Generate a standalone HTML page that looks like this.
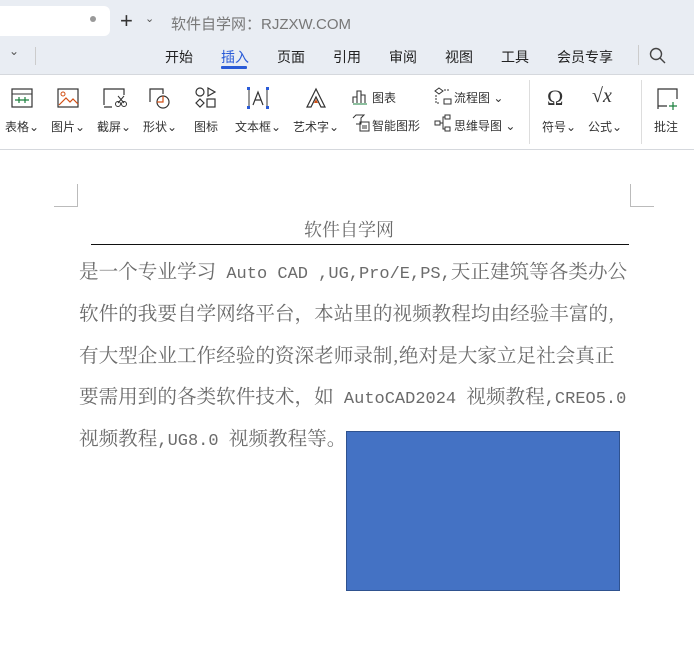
<!DOCTYPE html>
<html><head><meta charset="utf-8"><style>
*{margin:0;padding:0;box-sizing:border-box}
body{width:694px;height:651px;overflow:hidden;background:#fff;font-family:"Liberation Sans","Noto Sans CJK SC",sans-serif;position:relative}
.top{position:absolute;left:0;top:0;width:694px;height:74px;background:#e9edf3}
.tab{position:absolute;left:-10px;top:6px;width:120px;height:30px;background:#fff;border-radius:6px}
.a{position:absolute;white-space:nowrap}
.tb{position:absolute;left:0;top:74px;width:694px;height:76px;background:#fff;border-top:1px solid #d5d8dd;border-bottom:1px solid #d5d8dd}
.lbl{font-size:12px;color:#333}
.doc{font-family:"Noto Serif CJK SC","Liberation Serif",serif;font-size:19.6px;color:#6b6b6b;line-height:26px}
.m{font-family:"Liberation Mono",monospace;font-size:17px}
svg{position:absolute}
</style></head><body>
<div class="top"></div>
<div class="tab"></div>
<div class="a" style="left:90px;top:16px;width:6px;height:6px;border-radius:3px;background:#999"></div>
<div class="a" style="left:120px;top:8px;font-size:22px;color:#333">+</div>
<div class="a" style="left:145px;top:12px;font-size:11px;color:#555">⌄</div>
<div class="a" style="left:171px;top:13px;font-size:15px;color:#777">软件自学网：RJZXW.COM</div>
<div class="a" style="left:9px;top:44px;font-size:12px;color:#555">⌄</div>
<div class="a" style="left:35px;top:47px;width:1px;height:18px;background:#ccc"></div>
<div class="a" style="left:165px;top:47px;font-size:14px;color:#222">开始</div>
<div class="a" style="left:221px;top:47px;font-size:14px;color:#2a5bd7">插入</div>
<div class="a" style="left:221px;top:66px;width:26px;height:3px;background:#2a5bd7;border-radius:1px"></div>
<div class="a" style="left:277px;top:47px;font-size:14px;color:#222">页面</div>
<div class="a" style="left:333px;top:47px;font-size:14px;color:#222">引用</div>
<div class="a" style="left:389px;top:47px;font-size:14px;color:#222">审阅</div>
<div class="a" style="left:445px;top:47px;font-size:14px;color:#222">视图</div>
<div class="a" style="left:501px;top:47px;font-size:14px;color:#222">工具</div>
<div class="a" style="left:557px;top:47px;font-size:14px;color:#222">会员专享</div>
<div class="a" style="left:638px;top:45px;width:1px;height:20px;background:#ccc"></div>
<svg style="left:648px;top:46px" width="20" height="20"><circle cx="8" cy="8" r="5.5" fill="none" stroke="#444" stroke-width="1.4"/><path d="M12 12l5 5" stroke="#444" stroke-width="1.4"/></svg>
<div class="tb"></div>
<svg style="left:11px;top:88px" width="22" height="20"><rect x="1" y="1" width="20" height="18" fill="none" stroke="#333" stroke-width="1.2"/><path d="M1 6h20" stroke="#333"/><path d="M4 12h14M8 9v6M14 9v6" stroke="#1a7f3c" stroke-width="1.2"/></svg>
<svg style="left:57px;top:88px" width="22" height="20"><rect x="1" y="1" width="20" height="18" fill="none" stroke="#333" stroke-width="1.2"/><circle cx="6" cy="6" r="2" fill="none" stroke="#d24f14"/><path d="M2 17l7-7 4 4 3-3 5 5" fill="none" stroke="#d24f14" stroke-width="1.2"/></svg>
<svg style="left:103px;top:88px" width="24" height="20"><path d="M1 17V1h20v6M1 19h8" fill="none" stroke="#333" stroke-width="1.2"/><circle cx="15" cy="16" r="2.5" fill="none" stroke="#333"/><circle cx="21" cy="16" r="2.5" fill="none" stroke="#333"/><path d="M15 8l6 7M21 8l-6 7" stroke="#333"/></svg>
<svg style="left:149px;top:88px" width="22" height="22"><path d="M1 14V1h13v5" fill="none" stroke="#333" stroke-width="1.2"/><circle cx="14" cy="14" r="6" fill="none" stroke="#333" stroke-width="1.2"/><path d="M8 14h6V8" fill="none" stroke="#d24f14" stroke-width="1.2"/></svg>
<svg style="left:195px;top:87px" width="22" height="22"><circle cx="5" cy="5" r="4" fill="none" stroke="#333" stroke-width="1.2"/><path d="M13 1l7 4-7 4z M5 12l4 4-4 4-4-4z" fill="none" stroke="#333" stroke-width="1.2"/><rect x="12" y="12" width="8" height="8" fill="none" stroke="#333" stroke-width="1.2"/></svg>
<svg style="left:246px;top:87px" width="24" height="22"><path d="M3 2v18M21 2v18" stroke="#333"/><path d="M7 18l5-13 5 13M9 13h6" fill="none" stroke="#333" stroke-width="1.2"/><g fill="#2a5bd7"><rect x="1" y="0" width="3" height="3"/><rect x="20" y="0" width="3" height="3"/><rect x="1" y="19" width="3" height="3"/><rect x="20" y="19" width="3" height="3"/></g></svg>
<svg style="left:305px;top:87px" width="22" height="22"><path d="M2 20L11 2l9 18h-4l-5-10-5 10z" fill="none" stroke="#333" stroke-width="1.2"/><path d="M9 16h4l-2-4z" fill="#d24f14"/></svg>
<svg style="left:352px;top:89px" width="16" height="16"><path d="M1 14V8h4v6M5 14V2h4v12M9 14V6h4v8" fill="none" stroke="#333" stroke-width="1.1"/><path d="M1 15h14" stroke="#1a7f3c"/></svg>
<div class="a lbl" style="left:372px;top:89px">图表</div>
<svg style="left:352px;top:114px" width="18" height="18"><path d="M1 4l3-3h8l-3 3v6H4" fill="none" stroke="#333"/><rect x="8" y="8" width="9" height="9" fill="none" stroke="#333"/><path d="M10 12h5M10 14h5" stroke="#333"/></svg>
<div class="a lbl" style="left:372px;top:117px">智能图形</div>
<svg style="left:434px;top:87px" width="18" height="18"><path d="M5 1l4 3-4 3-4-3z" fill="none" stroke="#333"/><path d="M2 8v8h4" fill="none" stroke="#333" stroke-dasharray="2 1"/><rect x="10" y="12" width="7" height="5" fill="none" stroke="#333"/><path d="M10 3h6" stroke="#333" stroke-dasharray="2 1"/></svg>
<div class="a lbl" style="left:454px;top:89px">流程图 ⌄</div>
<svg style="left:434px;top:114px" width="18" height="18"><rect x="1" y="7" width="5" height="4" fill="none" stroke="#333"/><rect x="11" y="1" width="5" height="4" fill="none" stroke="#333"/><rect x="11" y="13" width="5" height="4" fill="none" stroke="#333"/><path d="M6 9h3V3h2M9 9v6h2" fill="none" stroke="#333"/></svg>
<div class="a lbl" style="left:454px;top:117px">思维导图 ⌄</div>
<div class="a" style="left:529px;top:80px;width:1px;height:64px;background:#ddd"></div>
<div class="a" style="left:547px;top:85px;font-size:22px;color:#333;font-family:'Liberation Serif',serif">Ω</div>
<div class="a" style="left:592px;top:85px;font-size:20px;color:#333;font-family:'Liberation Serif',serif;font-style:italic">√x</div>
<div class="a" style="left:641px;top:80px;width:1px;height:64px;background:#ddd"></div>
<svg style="left:655px;top:88px" width="24" height="22"><path d="M12 18H3v3V1h19v10" fill="none" stroke="#333" stroke-width="1.2"/><path d="M18 14v8M14 18h8" stroke="#1a7f3c" stroke-width="1.2"/></svg>
<div class="a lbl" style="left:5px;top:118px">表格⌄</div>
<div class="a lbl" style="left:51px;top:118px">图片⌄</div>
<div class="a lbl" style="left:97px;top:118px">截屏⌄</div>
<div class="a lbl" style="left:143px;top:118px">形状⌄</div>
<div class="a lbl" style="left:194px;top:118px">图标</div>
<div class="a lbl" style="left:235px;top:118px">文本框⌄</div>
<div class="a lbl" style="left:293px;top:118px">艺术字⌄</div>
<div class="a lbl" style="left:542px;top:118px">符号⌄</div>
<div class="a lbl" style="left:588px;top:118px">公式⌄</div>
<div class="a lbl" style="left:654px;top:118px">批注</div>
<div class="a" style="left:54px;top:184px;width:24px;height:23px;border-right:1px solid #bbb;border-bottom:1px solid #bbb"></div>
<div class="a" style="left:630px;top:184px;width:24px;height:23px;border-left:1px solid #bbb;border-bottom:1px solid #bbb"></div>
<div class="a doc" style="left:304px;top:216px;font-size:18px">软件自学网</div>
<div class="a" style="left:91px;top:244px;width:538px;height:1px;background:#111"></div>
<div class="a doc" style="left:79px;top:257px">是一个专业学习<span class="m"> Auto CAD ,UG,Pro/E,PS,</span>天正建筑等各类办公</div>
<div class="a doc" style="left:79px;top:299px">软件的我要自学网络平台，本站里的视频教程均由经验丰富的,</div>
<div class="a doc" style="left:79px;top:341px">有大型企业工作经验的资深老师录制,绝对是大家立足社会真正</div>
<div class="a doc" style="left:79px;top:382px">要需用到的各类软件技术，如<span class="m"> AutoCAD2024 </span>视频教程<span class="m">,CREO5.0</span></div>
<div class="a doc" style="left:79px;top:424px">视频教程<span class="m">,UG8.0 </span>视频教程等。</div>
<div class="a" style="left:346px;top:431px;width:274px;height:160px;background:#4472c4;border:1px solid #2f528f"></div>
</body></html>
